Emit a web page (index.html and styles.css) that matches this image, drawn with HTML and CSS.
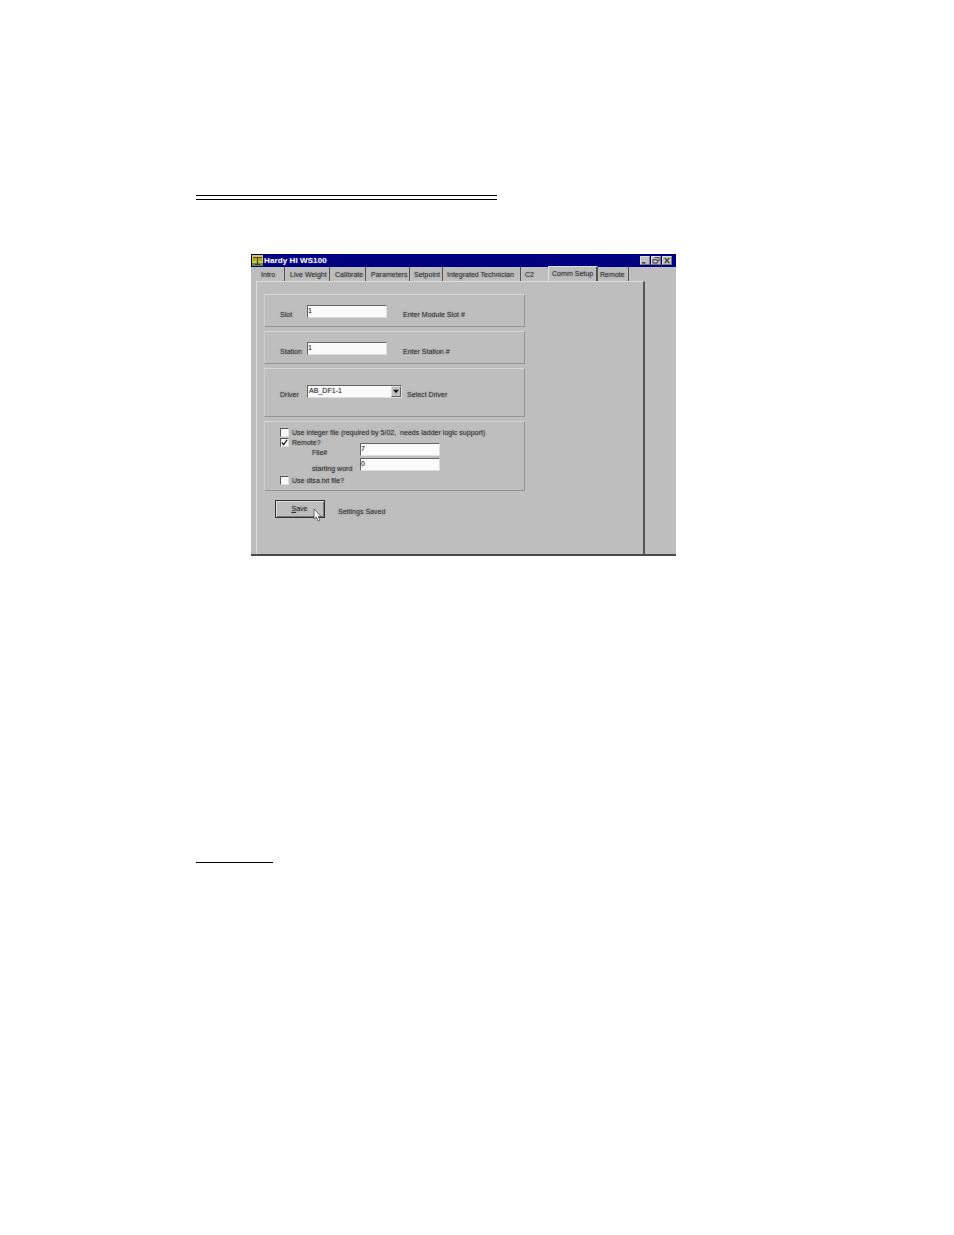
FILE: index.html
```html
<!DOCTYPE html>
<html lang="en">
<head>
<meta charset="utf-8">
<title>Hardy HI WS100</title>
<link rel="stylesheet" href="styles.css">
</head>
<body>
<main class="page">
  <div class="double-rule"></div>
  <section class="window">
    <header class="titlebar">
      <svg class="app-icon" viewBox="0 0 11 11"><rect width="11" height="11" fill="#d6c83a"/><rect y="8" width="11" height="3" fill="#5f8a4a"/><path d="M1 2h9v1.300H6.200V9H8v1H3V9h1.800V3.300H1z" fill="#4a4a28"/><path d="M1 4h2.500v2H1zM7.500 4H10v2H7.500z" fill="#a09a3a"/></svg>
      <span class="title">Hardy HI WS100</span>
      <div class="controls">
        <button class="ctl"><svg viewBox="0 0 9 8"><path d="M1 6h4v1.500H1z" fill="#333"/></svg></button>
        <button class="ctl"><svg viewBox="0 0 9 8"><path d="M3 .5h5v4H6.500M1 3h5v4H1z" fill="none" stroke="#333"/></svg></button>
        <button class="ctl"><svg viewBox="0 0 9 8"><path d="M2 1l5 6M7 1L2 7" stroke="#333" stroke-width="1.300"/></svg></button>
      </div>
    </header>
    <nav class="tabs">
      <span class="tab t-intro">Intro</span>
      <span class="tab t-live">Live Weight</span>
      <span class="tab t-cal">Calibrate</span>
      <span class="tab t-par">Parameters</span>
      <span class="tab t-set">Setpoint</span>
      <span class="tab t-int">Integrated Technician</span>
      <span class="tab t-c2">C2</span>
      <span class="tab t-active">Comm Setup</span>
      <span class="tab t-rem">Remote</span>
    </nav>
    <div class="panel">
      <div class="group group-short">
        <span class="label">Slot</span>
        <span class="field">1</span>
        <span class="hint">Enter Module Slot #</span>
      </div>
      <div class="group group-short">
        <span class="label">Station</span>
        <span class="field">1</span>
        <span class="hint">Enter Station #</span>
      </div>
      <div class="group group-driver">
        <span class="label">Driver</span>
        <span class="field select">AB_DF1-1<span class="arrow"><svg viewBox="0 0 7 7"><path d="M1 2h5L3.500 5z" fill="#111"/></svg></span></span>
        <span class="hint hint-near">Select Driver</span>
      </div>
      <div class="group group-options">
        <div class="opt-col">
          <div class="opt"><span class="check"></span>Use integer file (required by 5/02,&nbsp; needs ladder logic support)</div>
          <div class="opt"><span class="check"><svg viewBox="0 0 8 8"><path d="M1 4l2 2.500L7 1" fill="none" stroke="#222" stroke-width="1.500"/></svg></span>Remote?</div>
          <div class="opt sub">File#</div>
          <div class="opt sub sub-word">starting word</div>
          <div class="opt opt-last"><span class="check"></span>Use dtsa.txt file?</div>
        </div>
        <div class="input-col">
          <span class="field">7</span>
          <span class="field">0</span>
        </div>
      </div>
      <div class="save-row">
        <span class="save-btn"><span><u>S</u>ave</span></span>
        <span class="status">Settings Saved</span>
        <svg class="cursor" viewBox="0 0 9 15"><path d="M1 1v10l2.400-2 1.600 4 2-.8-1.600-3.800H8z" fill="#f4f4f4" stroke="#555" stroke-width=".8"/></svg>
      </div>
    </div>
  </section>
  <div class="short-rule"></div>
</main>
</body>
</html>
```

FILE: styles.css
```css
html, body { margin: 0; background: #fff; }
body { min-height: 1235px; font-family: "Liberation Sans", Arial, sans-serif; }
.page { padding: 195px 0 0 196px; }

.double-rule { width: 301px; height: 3px; border-top: 1px solid #000; border-bottom: 1px solid #000; }
.short-rule { width: 77px; height: 1px; background: #000; margin-top: 306px; }

.window {
  position: relative; width: 425px; height: 302px; margin: 54px 0 0 55px;
  background: #bebebe; box-sizing: border-box; border-bottom: 2px solid #4a4a4a;
  font-size: 7.05px; color: #333; text-shadow: 0 0 2px rgba(0, 0, 0, .35);
}
.titlebar { height: 13px; background: #000080; display: flex; align-items: center; padding: 0 4px 0 1px; }
.app-icon { width: 11px; height: 11px; flex: none; }
.title { color: #f2f2f8; font-weight: 700; font-size: 8px; margin-left: 1px; letter-spacing: .1px; text-shadow: 0 0 2px rgba(255, 255, 255, .35); }
.controls { margin-left: auto; display: flex; gap: 1px; }
.ctl { box-sizing: border-box; width: 10px; height: 9px; padding: 0; border: 1px solid; border-color: #ddd #777 #777 #ddd; background: #c0c0c0; display: block; }
.ctl svg { display: block; width: 8px; height: 7px; }

.tabs { display: flex; height: 14px; padding-left: 5px; box-sizing: border-box; }
.tab { box-sizing: border-box; height: 14px; line-height: 15px; padding-left: 5px; border-right: 1px solid #555; white-space: nowrap; }
.t-intro { width: 29px; }
.t-live { width: 45px; }
.t-cal { width: 36px; }
.t-par { width: 44px; }
.t-set { width: 33px; padding-left: 4px; }
.t-int { width: 78px; padding-left: 4px; }
.t-c2 { width: 27px; border-right: 0; padding-left: 4px; }
.t-active { width: 50px; height: 15px; line-height: 13px; padding-left: 3px; margin-top: -1px; border-top: 1px solid #dedede; border-left: 1px solid #dedede; border-right: 2px solid #555; position: relative; z-index: 1; background: #bebebe; }
.t-rem { width: 31px; padding-left: 2px; }

.panel { box-sizing: border-box; width: 389px; height: 273px; margin-left: 5px; padding: 12px 0 0 7px; border-top: 1px solid #dcdcdc; border-left: 1px solid #dcdcdc; border-right: 2px solid #555; }

.group { box-sizing: border-box; width: 261px; margin-bottom: 4px; display: flex; align-items: flex-start; border: 1px solid; border-color: #d6d6d6 #949494 #949494 #cecece; padding-left: 15px; }
.group-short { height: 33px; padding-top: 10px; }
.group-driver { height: 49px; padding-top: 16px; }
.group-options { height: 70px; padding-top: 5px; }

.label { width: 27px; padding-top: 5px; line-height: 10px; }
.field { box-sizing: border-box; display: block; width: 80px; height: 13px; background: #fbfbfb; border: 1px solid; border-color: #666 #ddd #ddd #666; line-height: 9px; }
.hint { margin-left: 16px; padding-top: 5px; line-height: 10px; }
.hint-near { margin-left: 5px; }
.select { position: relative; width: 95px; padding-left: 1px; }
.arrow { position: absolute; right: 0; top: 0; width: 10px; height: 11px; background: #c0c0c0; border: 1px solid; border-color: #ddd #666 #666 #ddd; box-sizing: border-box; }
.arrow svg { display: block; width: 8px; height: 9px; }

.opt-col { width: 80px; }
.opt { display: flex; align-items: center; height: 10px; white-space: nowrap; }
.check { box-sizing: border-box; width: 9px; height: 9px; margin-right: 3px; background: #f8f8f8; border: 1px solid; border-color: #555 #ddd #ddd #555; flex: none; }
.check svg { display: block; width: 7px; height: 7px; }
.sub { padding-left: 32px; }
.sub-word { margin-top: 6px; }
.opt-last { margin-top: 2px; }
.input-col { display: flex; flex-direction: column; gap: 2px; padding-top: 16px; }

.save-row { display: flex; align-items: center; position: relative; padding: 5px 0 0 11px; }
.save-btn { box-sizing: border-box; width: 50px; height: 18px; border: 1px solid #333; background: #bebebe; display: flex; align-items: center; justify-content: center; box-shadow: inset 1px 1px 0 #ddd, inset -1px -1px 0 #777; }
.save-btn span { margin-right: 1px; margin-top: -2px; }
.status { margin: 4px 0 0 13px; }
.cursor { position: absolute; left: 49px; top: 13px; width: 9px; height: 15px; }
```
